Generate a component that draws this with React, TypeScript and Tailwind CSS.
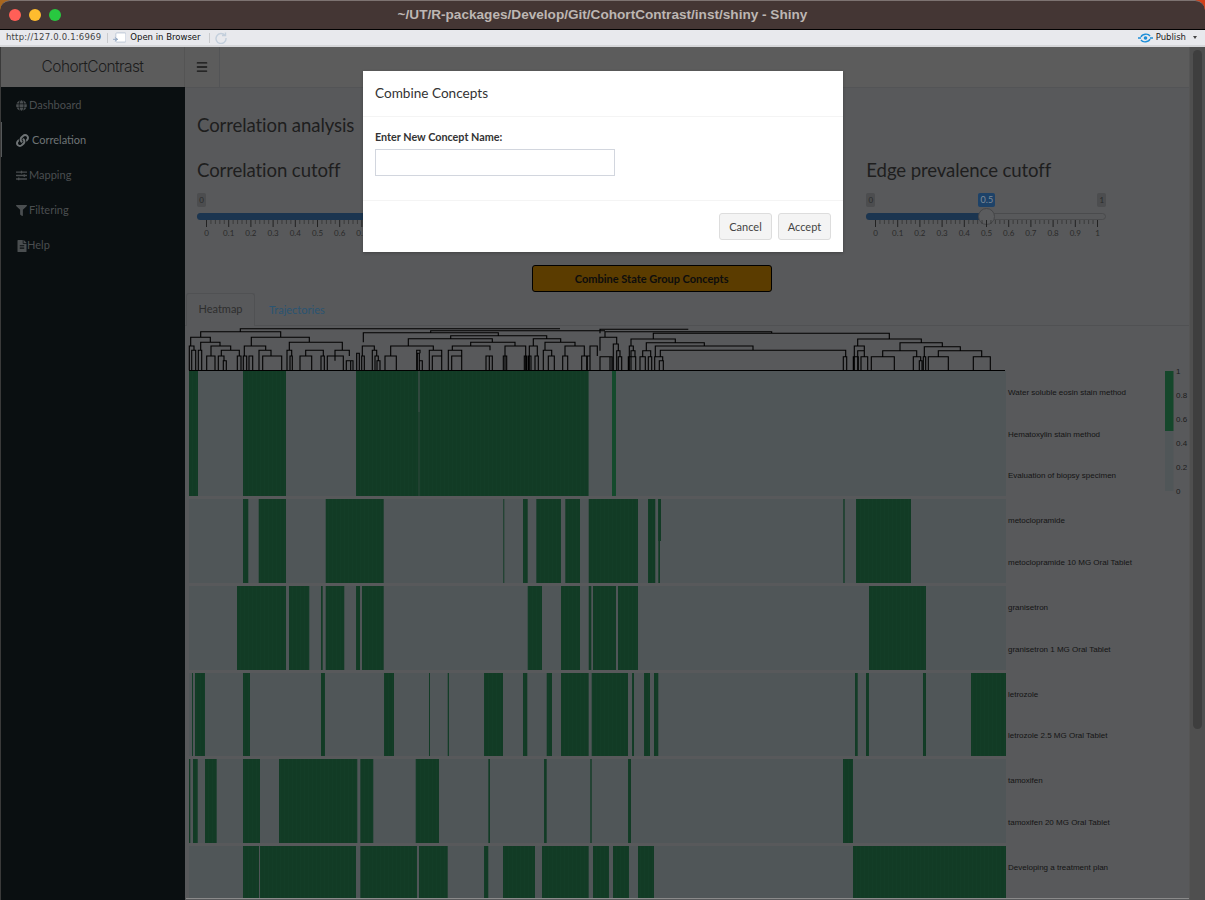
import { FaFileAlt, FaFilter, FaGlobe, FaLink, FaSlidersH } from "react-icons/fa";
import { Menu } from "lucide-react";

const NAV = [
  { label: "Dashboard", icon: <FaGlobe size={11} /> },
  { label: "Correlation", icon: <FaLink size={13} />, active: true },
  { label: "Mapping", icon: <FaSlidersH size={11} /> },
  { label: "Filtering", icon: <FaFilter size={11} /> },
  { label: "Help", icon: <FaFileAlt size={12} />, narrow: true },
];

// x ranges of the filled cells, one list per state group
const ROWS: { y: number; h: number; bars: number[][] }[] = [
  { y: 371, h: 125, bars: [[189, 198], [243, 286], [356, 418.5], [419.5, 588.6], [612, 616]] },
  { y: 499, h: 84, bars: [[243, 248.3], [258.7, 286], [325.7, 383.7], [503.3, 504.3], [523, 527.7], [536.3, 561], [565.3, 580], [588.7, 638], [648, 655.3], [658.3, 660], [843.3, 844.7], [856, 911]] },
  { y: 586, h: 84, bars: [[237, 286], [289, 309.3], [321, 322.7], [325.7, 344.3], [356, 360], [362, 383.7], [527.7, 542], [561, 580], [588.7, 591.3], [593, 616], [618, 638], [869, 926]] },
  { y: 673, h: 83, bars: [[192, 193], [195, 205], [243, 250], [321, 325], [384, 394], [429, 430], [447.7, 449], [484, 503], [523, 527.3], [546.7, 552], [561, 588.7], [591.7, 628], [632, 634], [644, 650], [654, 658.3], [855, 857.7], [866, 869], [923, 926], [971, 1006]] },
  { y: 759, h: 84, bars: [[189, 190.3], [193, 197.7], [205, 216.7], [243, 260], [279, 357.3], [360.3, 373.3], [415.7, 439], [488.3, 490], [544, 546.7], [590.3, 591.7], [628, 631], [843, 853]] },
  { y: 846, h: 52, bars: [[243, 259], [260, 356], [360.3, 417], [419, 447.7], [484, 488.3], [503, 535], [542, 588.7], [593, 609], [613, 629], [638, 654], [853, 1006]] },
];

const LABELS = [
  ["Water soluble eosin stain method", 392],
  ["Hematoxylin stain method", 434],
  ["Evaluation of biopsy specimen", 475],
  ["metoclopramide", 520],
  ["metoclopramide 10 MG Oral Tablet", 562],
  ["granisetron", 607],
  ["granisetron 1 MG Oral Tablet", 649],
  ["letrozole", 694],
  ["letrozole 2.5 MG Oral Tablet", 735],
  ["tamoxifen", 780],
  ["tamoxifen 20 MG Oral Tablet", 822],
  ["Developing a treatment plan", 867],
] as const;

// dendrogram brackets read off the left half: x1, x2, y, leg1 end, leg2 end
const TREE_LEFT = [
  [166, 1125, 116, 125, 116], [47, 287, 125, 142, 142], [17, 76, 142, 168, 157], [47, 105, 157, 180, 168], [78, 137, 168, 198, 181],
  [109, 163, 181, 198, 198], [199, 373, 142, 168, 157], [178, 242, 168, 198, 181], [313, 472, 157, 181, 181], [362, 415, 181, 198, 198],
  [450, 493, 181, 212, 198], [13, 27, 168, 241, 181], [20, 32, 181, 241, 241], [40, 50, 181, 241, 241], [65, 90, 198, 241, 241],
  [100, 117, 198, 241, 212], [115, 124, 212, 241, 241], [157, 168, 198, 241, 241], [175, 185, 198, 241, 241], [192, 203, 198, 241, 241],
  [222, 258, 181, 241, 198], [233, 290, 198, 241, 241], [306, 320, 181, 241, 198], [315, 322, 198, 241, 241], [345, 380, 198, 241, 241],
  [408, 418, 198, 241, 241], [427, 475, 198, 241, 241], [484, 504, 212, 241, 241], [497, 504, 212, 241, 241], [515, 523, 190, 241, 241],
  [530, 538, 198, 241, 241], [532, 568, 168, 198, 181], [562, 575, 181, 241, 198], [570, 580, 198, 241, 212], [576, 585, 212, 241, 241],
  [600, 634, 198, 241, 241], [617, 745, 168, 198, 181], [535, 940, 128, 157, 137], [737, 1260, 122, 128, 122], [797, 1085, 137, 146, 146],
  [670, 922, 146, 168, 157], [857, 990, 157, 168, 168], [802, 915, 168, 181, 181], [960, 1022, 168, 241, 241], [1045, 1127, 146, 168, 157],
  [1080, 1170, 157, 181, 168], [1033, 1057, 168, 241, 198], [1075, 1100, 181, 241, 198], [1140, 1198, 168, 198, 198], [695, 705, 181, 241, 190],
  [697, 703, 190, 241, 212], [703, 712, 212, 241, 241], [733, 770, 181, 241, 198], [742, 770, 198, 241, 241], [790, 830, 181, 241, 198],
  [800, 830, 198, 241, 241], [903, 922, 198, 241, 241], [913, 922, 198, 241, 241], [955, 965, 198, 241, 241], [1018, 1025, 198, 241, 241],
  [1030, 1038, 198, 241, 241], [1050, 1060, 198, 241, 241], [1090, 1108, 198, 241, 241], [1133, 1148, 198, 241, 241], [1190, 1207, 198, 241, 241],
  [1205, 1215, 198, 241, 241], [1215, 1237, 168, 241, 198],
];

// same, right half
const TREE_RIGHT = [
  [0, 265, 28, 40, 28], [15, 515, 35, 52, 40], [160, 868, 40, 57, 57], [0, 50, 52, 92, 72], [40, 55, 72, 151, 92], [50, 60, 92, 151, 110],
  [93, 226, 57, 78, 68], [88, 100, 78, 151, 92], [93, 105, 92, 151, 110], [85, 107, 110, 151, 151], [139, 313, 68, 92, 78],
  [128, 152, 92, 110, 110], [120, 136, 110, 151, 151], [145, 155, 110, 151, 151], [166, 459, 78, 110, 91], [181, 737, 91, 110, 110],
  [164, 188, 110, 151, 122], [178, 190, 122, 151, 151], [773, 964, 57, 78, 68], [763, 793, 78, 151, 92], [773, 793, 92, 151, 110],
  [783, 803, 110, 151, 151], [760, 775, 110, 151, 151], [900, 1027, 68, 92, 80], [848, 950, 92, 110, 110], [814, 883, 110, 151, 151],
  [940, 962, 110, 151, 122], [958, 966, 122, 151, 151], [973, 1081, 80, 110, 92], [1015, 1145, 92, 110, 110], [970, 977, 110, 151, 151],
  [985, 1045, 110, 151, 151], [1120, 1171, 110, 151, 151], [730, 740, 110, 151, 151], [30, 36, 110, 151, 151], [0, 30, 110, 151, 151],
  [55, 65, 110, 151, 151],
];

const bracket = (b: number[], ox: number, oy: number) => {
  const x = (v: number) => (ox + v / 3).toFixed(1);
  const y = (v: number) => (oy + v / 3).toFixed(1);
  return `M${x(b[0])} ${y(b[3])}V${y(b[2])}H${x(b[1])}V${y(b[4])}`;
};

const TREE_PATH = [
  ...TREE_LEFT.map((b) => bracket(b, 185, 290)),
  ...TREE_RIGHT.map((b) => bracket(b, 600, 320)),
  "M189 370.5H1005",
].join("");

function Heatmap() {
  return (
    <svg viewBox="185 326 1004 574" className="block w-[1004px] h-[574px]">
      <defs>
        <pattern id="cols" x="0" width="4" height="10" patternUnits="userSpaceOnUse">
          <rect width="4" height="10" fill="#123b25" />
          <rect width="1" height="10" fill="#133d27" />
        </pattern>
      </defs>
      <path d={TREE_PATH} fill="none" stroke="#000" strokeWidth="1.1" />
      {ROWS.map((row) => (
        <g key={row.y}>
          <rect x="189" y={row.y} width="817" height={row.h} fill="#505658" />
          {row.bars.map((b) => (
            <rect key={b[0]} x={b[0]} y={row.y} width={b[1] - b[0]} height={row.h} fill="url(#cols)" />
          ))}
        </g>
      ))}
      <rect x="658.3" y="499" width="2.7" height="42" fill="#123b25" />
      <rect x="418.5" y="412" width="1" height="84" fill="#123b25" />
      <rect x="612" y="371" width="4" height="125" fill="#144a2c" />
      <path d="M186 898.5H1189" stroke="#8a8a8a" />
      {LABELS.map(([text, y]) => (
        <text key={text} x="1008" y={y + 3} fontSize="8" fill="#141414" fontFamily="Liberation Sans, sans-serif">
          {text}
        </text>
      ))}
      <rect x="1165" y="371" width="8.5" height="60" fill="#15472b" />
      <rect x="1165" y="431" width="8.5" height="60" fill="#505658" />
      {["1", "0.8", "0.6", "0.4", "0.2", "0"].map((t, i) => (
        <text key={t} x="1176" y={374 + i * 24} fontSize="8" fill="#1c1c1c" fontFamily="Liberation Sans, sans-serif">
          {t}
        </text>
      ))}
    </svg>
  );
}

function Slider({ value }: { value: number }) {
  const px = 9 + value * 222;
  const ticks = Array.from({ length: 51 }, (_, i) => i);
  return (
    <div className="relative w-[240px] h-[50px]">
      <span className="absolute left-0 top-[1px] w-[9px] h-[14px] rounded-[2px] bg-[#4c4d4f] text-[8px] leading-[14px] text-center text-[#2a2a2a]">0</span>
      <span className="absolute right-0 top-[1px] w-[9px] h-[14px] rounded-[2px] bg-[#4c4d4f] text-[8px] leading-[14px] text-center text-[#2a2a2a]">1</span>
      <span className="absolute top-[1px] w-[17px] h-[14px] -ml-[8px] rounded-[2px] bg-[#1d4268] text-[9px] leading-[14px] text-center text-[#7f8c99]" style={{ left: px }}>
        {value}
      </span>
      <div className="absolute left-0 right-0 top-[21px] h-[7px] rounded-full border border-[#4a4b4d] bg-[#58595b]" />
      <div className="absolute left-0 top-[21px] h-[7px] rounded-l-full bg-[#1b3550]" style={{ width: px }} />
      <div className="absolute top-[16px] w-[17px] h-[17px] -ml-[8.5px] rounded-full border border-[#454648] bg-[#5b5c5e]" style={{ left: px }} />
      <svg viewBox="0 0 240 22" className="absolute left-0 top-[28px] w-[240px] h-[22px]">
        {ticks.map((i) => {
          const x = 9.5 + i * 4.44;
          return <path key={i} d={`M${x} 0v${i % 5 === 0 ? 7 : 4}`} stroke={i % 5 === 0 ? "#141414" : "#333"} strokeWidth="0.8" />;
        })}
        {ticks
          .filter((i) => i % 5 === 0)
          .map((i) => (
            <text key={i} x={9.5 + i * 4.44} y="16" fontSize="8" textAnchor="middle" fill="#2a2a2a" fontFamily="Lato, sans-serif">
              {i === 0 ? "0" : i === 50 ? "1" : (i / 50).toFixed(1)}
            </text>
          ))}
      </svg>
    </div>
  );
}

function RStudioBars() {
  return (
    <>
      <div className="relative h-[29px] shrink-0 flex items-center justify-center bg-[#443634] border-t border-[#7d7371] rounded-t-[10px]">
        <div className="absolute left-[9px] top-[8px] flex gap-[8px]">
          <span className="w-[12px] h-[12px] rounded-full bg-[#ff5f57]" />
          <span className="w-[12px] h-[12px] rounded-full bg-[#febc2e]" />
          <span className="w-[12px] h-[12px] rounded-full bg-[#28c840]" />
        </div>
        <span className="font-['Liberation_Sans',sans-serif] font-bold text-[13.6px] text-[#bdb6b3]">~/UT/R-packages/Develop/Git/CohortContrast/inst/shiny - Shiny</span>
      </div>
      <div className="h-[18px] shrink-0 flex items-center border-t border-black border-b-2 border-b-[#d6d7da] bg-[#e8e9ed] font-['DejaVu_Sans',sans-serif] text-[8.5px]">
        <span className="ml-[6px] tracking-[0.2px] text-[#444]">http://127.0.0.1:6969</span>
        <span className="ml-[6px] w-px h-[10px] bg-[#c9cacd]" />
        <svg viewBox="0 0 14 12" className="ml-[5px] w-[13px] h-[11px]">
          <rect x="3" y="1" width="11" height="10" rx="1" fill="#fff" stroke="#b9c4d4" />
          <path d="M0 8h5M2 6l3 2-3 2" stroke="#8fa5c2" fill="none" />
        </svg>
        <span className="ml-[4px] text-[#111]">Open in Browser</span>
        <span className="ml-[8px] w-px h-[10px] bg-[#c9cacd]" />
        <svg viewBox="0 0 12 12" className="ml-[5px] w-[12px] h-[12px]" fill="none" stroke="#c3cfdc" strokeWidth="1.4">
          <path d="M10 3.5A5 5 0 1 0 11 6" />
          <path d="M7 3.5h3.5V.5" />
        </svg>
        <svg viewBox="0 0 15 10" className="ml-auto w-[15px] h-[10px]" fill="none" stroke="#1c8ed8" strokeWidth="1.4">
          <path d="M0 5h3M12 5h3M3 4c1-3 7-4 9-1M12 6c-1 3-7 4-9 1" />
          <circle cx="7.5" cy="5" r="1.8" fill="#1c8ed8" stroke="none" />
        </svg>
        <span className="ml-[3px] text-[#222]">Publish</span>
        <span className="ml-[7px] mr-[8px] w-0 h-0 border-x-[2.5px] border-x-transparent border-t-[3px] border-t-[#444]" />
      </div>
    </>
  );
}

function CombineModal() {
  return (
    <div className="absolute left-[363px] top-[71px] w-[480px] h-[181px] flex flex-col bg-white text-[#333] shadow-[0_1px_3px_rgba(0,0,0,0.25)] font-['Lato',sans-serif]">
      <div className="h-[46px] shrink-0 flex items-center px-3 border-b border-[#f4f4f4] text-[13.6px]">Combine Concepts</div>
      <div className="h-[84px] shrink-0 px-3 pt-[13px] border-b border-[#f4f4f4]">
        <label className="block text-[10.8px] leading-[14px] font-bold">Enter New Concept Name:</label>
        <input className="block mt-[5px] w-[240px] h-[27px] border border-[#d2d6de] outline-none" />
      </div>
      <div className="flex justify-end gap-[6px] pt-3 pr-3">
        <button className="w-[53px] h-[27px] pt-[2px] rounded-[3px] border border-[#ddd] bg-[#f4f4f4] text-[11px] text-[#444]">Cancel</button>
        <button className="w-[53px] h-[27px] pt-[2px] rounded-[3px] border border-[#ddd] bg-[#f4f4f4] text-[11px] text-[#444]">Accept</button>
      </div>
    </div>
  );
}

export default function App() {
  return (
    <div className="relative w-[1205px] h-[900px] overflow-hidden bg-gradient-to-r from-[#a8671f] to-[#d0401a] font-['Lato',sans-serif]">
      <div className="flex flex-col h-full rounded-t-[10px] overflow-hidden">
        <RStudioBars />
        <div className="flex flex-1 min-h-0 border-l border-[#3a3a3a] bg-[#58595b]">
          <aside className="w-[184px] shrink-0 flex flex-col bg-[#0a0f11]">
            <div className="h-[40px] shrink-0 flex items-center justify-center bg-[#5c5c5c] border-r border-[#545454] font-['Inter',sans-serif] font-light text-[15.5px] tracking-[-0.6px] text-[#1c1c1c]">CohortContrast</div>
            <nav>
              {NAV.map((item) => (
                <div key={item.label} className={`h-[35px] pt-[2px] flex items-center pl-[14px] text-[11px] border-l-[1.5px] ${item.active ? "border-[#55585a] text-[#6f7476]" : "border-transparent text-[#4a4e50]"}`}>
                  <span className={item.narrow ? "w-[11px]" : "w-[13px]"}>{item.icon}</span>
                  <span className={item.active ? "ml-[3px]" : ""}>{item.label}</span>
                </div>
              ))}
            </nav>
          </aside>
          <main className="w-[1004px] shrink-0 min-w-0 overflow-hidden">
            <div className="h-[41px] flex bg-[#5c5c5c] border-b border-[#535456]">
              <div className="w-[35px] flex items-center justify-center border-r border-[#535456] text-[#151515]">
                <Menu size={14} strokeWidth={2.2} />
              </div>
            </div>
            <div className="px-3 pt-[23px] text-[#1e1e1e]">
              <h2 className="h-[26px] text-[18.6px] tracking-[-0.1px] leading-[28px]">Correlation analysis</h2>
              <div className="grid grid-cols-3 -mx-3 mt-[19px] h-[136px]">
                <div className="px-3">
                  <h3 className="h-[26px] text-[18.6px] tracking-[-0.1px] leading-[28px]">Correlation cutoff</h3>
                  <div className="mt-[10px]"><Slider value={0.8} /></div>
                </div>
                <div className="px-3 pt-[69px]">
                  <div className="w-[240px] h-[27px] rounded-[3px] border border-[#12283c] bg-[#1b3550]" />
                  <button className="block mt-[13px] w-[240px] h-[27px] pt-[2px] rounded-[3px] border border-black bg-[#5b3c00] font-bold text-[11px] text-[#0d0d0d]">Combine State Group Concepts</button>
                </div>
                <div className="px-3">
                  <h3 className="h-[26px] text-[18.6px] tracking-[-0.1px] leading-[28px]">Edge prevalence cutoff</h3>
                  <div className="mt-[10px]"><Slider value={0.5} /></div>
                </div>
              </div>
            </div>
            <div className="h-[34px] flex items-end border-b border-[#505153] pl-px text-[11px]">
              <div className="w-[69px] h-[33px] pb-[2px] -mb-px flex items-center justify-center rounded-t-[3px] border border-[#505153] border-b-0 bg-[#58595b] text-[#2e2e2e]">Heatmap</div>
              <div className="h-[33px] pt-[3px] ml-[14px] flex items-center text-[#2a5472]">Trajectories</div>
            </div>
            <Heatmap />
          </main>
          <div className="flex-1 flex justify-center bg-[#4f4f4f] border-l border-[#555] pt-[3px]">
            <div className="w-[9px] h-[679px] rounded-full bg-[#3e3e3e]" />
          </div>
        </div>
      </div>
      <CombineModal />
    </div>
  );
}
